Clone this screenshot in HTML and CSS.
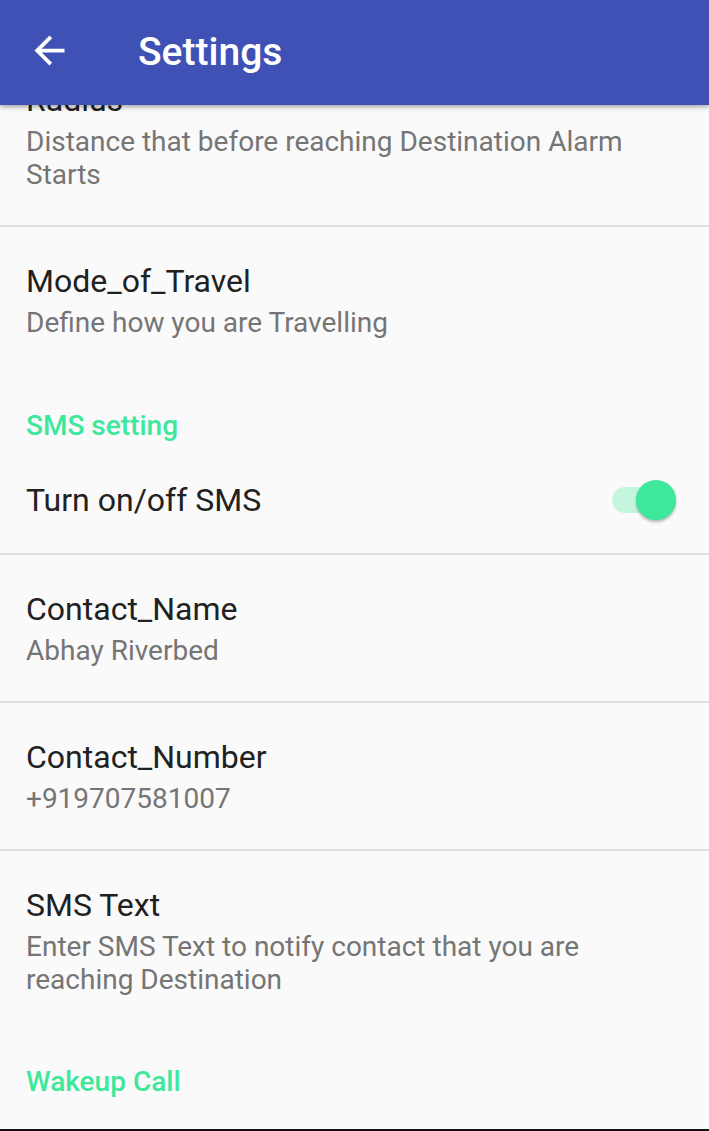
FILE: index.html
```html
<!DOCTYPE html>
<html>
<head>
<meta charset="utf-8">
<link rel="stylesheet" href="styles.css">
</head>
<body>
<div class="screen">
  <header class="appbar">
    <svg class="back" viewBox="0 0 24 24" width="45" height="45"><path d="M20 11H7.83l5.59-5.59L12 4l-8 8 8 8 1.41-1.41L7.83 13H20v-2z" fill="#fff"/></svg>
    <h1 class="appbar-title">Settings</h1>
  </header>
  <main class="list">
    <div class="pref">
      <div class="pref-title">Radius</div>
      <div class="pref-summary">Distance that before reaching Destination Alarm Starts</div>
    </div>
    <div class="divider"></div>
    <div class="pref">
      <div class="pref-title">Mode_of_Travel</div>
      <div class="pref-summary">Define how you are Travelling</div>
    </div>
    <div class="category">SMS setting</div>
    <div class="pref pref-switch">
      <div class="pref-title">Turn on/off SMS</div>
      <div class="switch"><div class="track"></div><div class="thumb"></div></div>
    </div>
    <div class="divider"></div>
    <div class="pref">
      <div class="pref-title">Contact_Name</div>
      <div class="pref-summary">Abhay Riverbed</div>
    </div>
    <div class="divider"></div>
    <div class="pref">
      <div class="pref-title">Contact_Number</div>
      <div class="pref-summary">+919707581007</div>
    </div>
    <div class="divider"></div>
    <div class="pref">
      <div class="pref-title">SMS Text</div>
      <div class="pref-summary">Enter SMS Text to notify contact that you are reaching Destination</div>
    </div>
    <div class="category category-last">Wakeup Call</div>
  </main>
  <div class="bottom-edge"></div>
</div>
</body>
</html>
```
FILE: styles.css
```css
* { box-sizing: border-box; }
html, body {
  margin: 0;
  padding: 0;
  background: #fafafa;
}
body {
  font-family: Roboto, "Liberation Sans", sans-serif;
}
.screen {
  position: relative;
  width: 709px;
  height: 1131px;
  overflow: hidden;
  background: #fafafa;
}
.appbar {
  position: absolute;
  top: 0;
  left: 0;
  right: 0;
  height: 105px;
  background: #3f51b5;
  display: flex;
  align-items: center;
  z-index: 2;
  box-shadow: 0 2px 4px rgba(0,0,0,0.25), 0 1px 8px rgba(0,0,0,0.12);
}
.back {
  margin-left: 27px;
  margin-top: -4px;
  flex: none;
}
.appbar-title {
  margin: -2px 0 0 66px;
  color: #fff;
  font-size: 39px;
  font-weight: 500;
}
.list {
  padding-top: 46px;
  display: flex;
  flex-direction: column;
}
.pref {
  padding: 34px 26px 34px 26px;
}
.pref-title {
  font-size: 32px;
  line-height: 40px;
  color: #212121;
}
.pref-summary {
  margin-top: 5px;
  font-size: 28px;
  line-height: 33px;
  color: #757575;
  padding-right: 60px;
}
.divider {
  height: 2px;
  background: #e0e0e0;
}
.category {
  padding: 38px 26px 0 26px;
  font-size: 28px;
  line-height: 30px;
  font-weight: 500;
  color: #3ee89b;
}
.category-last {
  padding-top: 37px;
}
.pref-switch {
  display: flex;
  align-items: center;
  justify-content: space-between;
  padding: 39px 33px 33px 26px;
}
.switch {
  position: relative;
  width: 64px;
  height: 40px;
}
.track {
  position: absolute;
  left: 0;
  right: 0;
  top: 7px;
  height: 26px;
  border-radius: 13px;
  background: #c4f6df;
}
.thumb {
  position: absolute;
  right: 0;
  top: 0;
  width: 40px;
  height: 40px;
  border-radius: 50%;
  background: #3ee89b;
  box-shadow: 0 2px 3px rgba(0,0,0,0.28);
}
.bottom-edge {
  position: absolute;
  left: 0;
  right: 0;
  bottom: 0;
  height: 2px;
  background: #111;
}
```
